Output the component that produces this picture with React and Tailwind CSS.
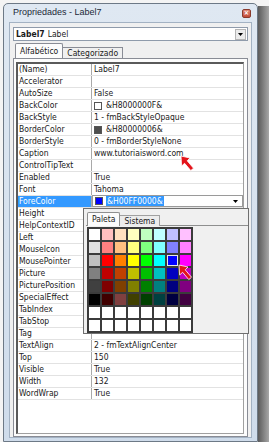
import React from 'react';

const rows = [
  ['(Name)', 'Label7'],
  ['Accelerator', ''],
  ['AutoSize', 'False'],
  ['BackColor', '&H8000000F&', '#ffffff'],
  ['BackStyle', '1 - fmBackStyleOpaque'],
  ['BorderColor', '&H80000006&', '#4d4d4d'],
  ['BorderStyle', '0 - fmBorderStyleNone'],
  ['Caption', 'www.tutoriaisword.com'],
  ['ControlTipText', ''],
  ['Enabled', 'True'],
  ['Font', 'Tahoma'],
  ['ForeColor', '&H00FF0000&', '#0000ff'],
  // values of these rows sit under the open palette
  ['Height', ''],
  ['HelpContextID', ''],
  ['Left', ''],
  ['MouseIcon', ''],
  ['MousePointer', ''],
  ['Picture', ''],
  ['PicturePosition', ''],
  ['SpecialEffect', ''],
  ['TabIndex', ''],
  ['TabStop', ''],
  ['Tag', ''],
  ['TextAlign', '2 - fmTextAlignCenter'],
  ['Top', '150'],
  ['Visible', 'True'],
  ['Width', '132'],
  ['WordWrap', 'True'],
];

const palette = [
  ['#ffffff', '#ffc0c0', '#ffe0c0', '#ffffc0', '#c0ffc0', '#c0ffff', '#c0c0ff', '#ffc0ff'],
  ['#e0e0e0', '#ff8080', '#ffc080', '#ffff80', '#80ff80', '#80ffff', '#8080ff', '#ff80ff'],
  ['#c0c0c0', '#ff0000', '#ff8000', '#ffff00', '#00ff00', '#00ffff', '#0000ff', '#ff00ff'],
  ['#808080', '#c00000', '#c04000', '#c0c000', '#00c000', '#00c0c0', '#0000c0', '#c000c0'],
  ['#404040', '#800000', '#804000', '#808000', '#008000', '#008080', '#000080', '#800080'],
  ['#000000', '#400000', '#804040', '#404000', '#004000', '#004040', '#000040', '#400040'],
  ['#ffffff', '#ffffff', '#ffffff', '#ffffff', '#ffffff', '#ffffff', '#ffffff', '#ffffff'],
  ['#ffffff', '#ffffff', '#ffffff', '#ffffff', '#ffffff', '#ffffff', '#ffffff', '#ffffff'],
];

// red pointer arrow used twice in the screenshot
const RedArrow = ({ className }) => (
  <svg className={className} width="15" height="17" viewBox="0 0 15 17">
    <path
      d="M1,1 L10,3 L7.2,5.8 L13.5,13.2 L10.8,15.6 L4.6,8.3 L1.6,11 Z"
      fill="#e3141b"
      stroke="#ffffff"
      strokeWidth="0.8"
      strokeLinejoin="round"
    />
  </svg>
);

const DownArrow = () => (
  <svg width="5" height="3" viewBox="0 0 5 3">
    <path d="M0,0 L5,0 L2.5,3 Z" fill="#000" />
  </svg>
);

const Swatch = ({ color }) => (
  <span className="w-[8px] h-[8px] border border-[#555] shrink-0" style={{ backgroundColor: color }} />
);

const PalettePopup = () => (
  <div className="absolute left-[65px] top-[144px] w-[166px] h-[126px] bg-[#f0f0f0] border border-[#6f6f6f] z-10 pl-[2px] pt-[3px]">
    <div className="flex items-end h-[14px] pl-[1px]">
      <div className="h-[14px] px-[4px] bg-[#fbfbfb] border border-b-0 border-[#8e8f8f] rounded-t-[2px] flex items-center">Paleta</div>
      <div className="h-[11px] px-[4px] bg-[#ececec] border border-l-0 border-b-0 border-[#a0a0a0] flex items-center">Sistema</div>
    </div>
    <div className="border-t border-[#8e8f8f] -mt-[1px] pt-[1px] pl-[1px]">
      <div className="inline-grid grid-cols-8 gap-[2px] p-[2px] bg-[#3b3b3b]">
        {palette.flat().map((c, i) => (
          <span
            key={i}
            className={i === 22 ? 'w-[11px] h-[11px] outline outline-1 outline-[#e8e8e8] -outline-offset-1' : 'w-[11px] h-[11px]'}
            style={{ backgroundColor: c }}
          />
        ))}
      </div>
    </div>
  </div>
);

const Row = ({ name, value, swatch, selected }) => {
  if (selected) {
    return (
      <div className="flex h-[12px] border-b border-[#e2e2e2]">
        <div className="w-[74px] shrink-0 bg-[#3399ff] text-white pl-[1px] border-r border-[#a9a9a9] leading-[11px]">{name}</div>
        <div className="flex-1 flex items-center gap-[3px] pl-[2px] pr-[4px] border border-[#9a9a9a] -mt-[1px] h-[12px] bg-white">
          <Swatch color={swatch} />
          <span className="bg-[#3399ff] text-white px-[1px] leading-[10px]">{value}</span>
          <span className="ml-auto"><DownArrow /></span>
        </div>
      </div>
    );
  }
  return (
    <div className="flex h-[12px] border-b border-[#e2e2e2]">
      <div className="w-[74px] shrink-0 pl-[1px] border-r border-[#a9a9a9] leading-[11px] whitespace-nowrap overflow-hidden">{name}</div>
      <div className="flex-1 flex items-center gap-[4px] pl-[2px] whitespace-nowrap overflow-hidden leading-[11px]">
        {swatch && <Swatch color={swatch} />}
        {value && <span>{value}</span>}
      </div>
    </div>
  );
};

export default function App() {
  return (
    <div className="w-[269px] h-[442px] overflow-hidden bg-[#f4f4f4] relative font-['DejaVu_Sans_Condensed','Liberation_Sans',sans-serif] text-[8.5px] text-[#1a1a1a]">
      <div className="absolute right-0 top-[6px] w-[11px] h-[440px] bg-gradient-to-r from-[#5c5c5c] to-[#a7a7a7]" />
      <div className="relative ml-[3px] mt-[3px] w-[255px] h-[439px] border border-[#6d7986] rounded-t-[5px] bg-gradient-to-b from-[#dfe8f2] to-[#cfdceb] flex flex-col">
        <div className="h-[18px] flex items-center justify-between pl-[9px] pr-[6px]">
          <span className="font-['Liberation_Sans',sans-serif] text-[9px] text-[#1c2838]">Propriedades - Label7</span>
          <span className="w-[9px] h-[9px] rounded-[2px] bg-gradient-to-b from-[#e08a78] to-[#c24a36] border border-[#8a3a2c] flex items-center justify-center text-white text-[7px] leading-none font-bold">×</span>
        </div>
        <div className="flex-1 mx-[5px] mb-[3px] bg-[#f0f0f0] border border-[#a3b2c3] flex flex-col px-[3px]">
          <div className="mt-[4px] h-[14px] flex items-center bg-white border border-[#8f9bab] pl-[2px] pr-[1px]">
            <span className="font-bold">Label7</span>
            <span className="ml-[3px]">Label</span>
            <span className="ml-auto w-[11px] h-[11px] flex items-center justify-center bg-[#ebebeb] border border-[#b5b5b5]"><DownArrow /></span>
          </div>
          <div className="mt-[3px] flex items-end h-[14px] pl-[2px]">
            <div className="h-[15px] px-[4px] bg-[#fcfcfc] border border-b-0 border-[#898c95] rounded-t-[2px] flex items-center relative z-[1]">Alfabético</div>
            <div className="h-[11px] px-[4px] bg-[#f0f0f0] border border-l-0 border-b-0 border-[#898c95] flex items-center">Categorizado</div>
          </div>
          <div className="flex-1 bg-[#fcfcfc] border border-[#898c95] pl-[2px] pt-[3px] pr-[3px] pb-[2px] flex">
            <div className="relative flex-1 bg-white border-l-2 border-t-2 border-r border-b border-l-[#5a5a5a] border-t-[#5a5a5a] border-r-[#a0a0a0] border-b-[#a0a0a0]">
              {rows.map(([n, v, s], i) => (
                <Row key={n} name={n} value={v} swatch={s} selected={n === 'ForeColor'} />
              ))}
              <PalettePopup />
              <RedArrow className="absolute left-[162px] top-[91px] z-20" />
              <RedArrow className="absolute left-[160px] top-[200px] z-20" />
            </div>
          </div>
        </div>
      </div>
    </div>
  );
}
